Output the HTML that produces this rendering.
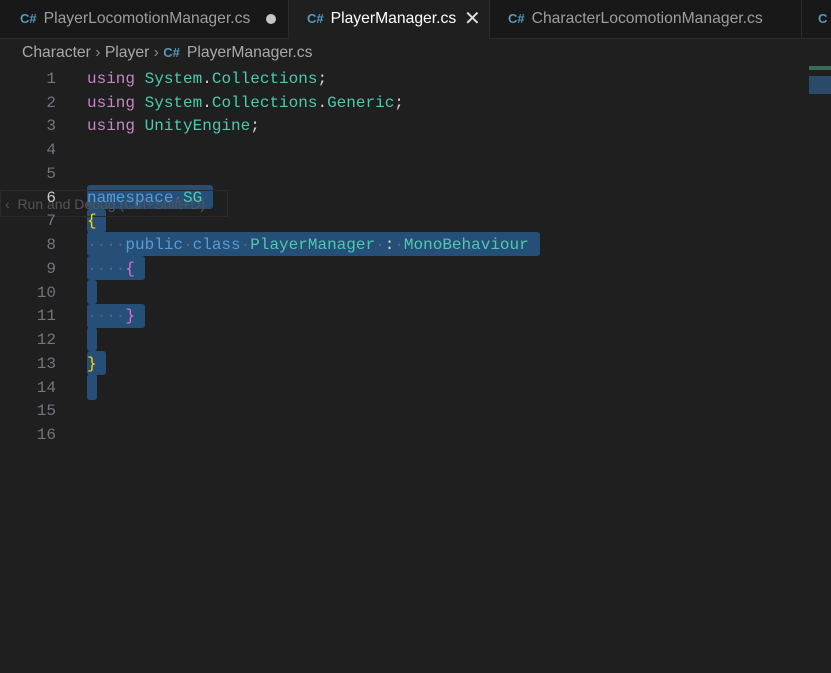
<!DOCTYPE html><html><head><style>
body{margin:0;width:831px;height:673px;background:#1f1f1f;overflow:hidden;font-family:"Liberation Sans",sans-serif;position:relative}
.tabs{position:absolute;left:0;top:0;width:831px;height:38px;background:#181818;border-bottom:1px solid #2b2b2b}
.tab{position:absolute;top:0;height:38px;background:#181818;border-right:1px solid #2b2b2b;color:#9d9d9d;font-size:15.7px;line-height:38px;box-sizing:border-box}
.tab.act{background:#1f1f1f;color:#fff;height:39px}
.ci{color:#519aba;font-weight:bold;font-size:13px;margin-right:7px}
.bc{position:absolute;left:22px;top:44px;color:#a9a9a9;font-size:15.7px}
.code{position:absolute;left:87px;font:16px/23.73px "Liberation Mono",monospace;white-space:pre;color:#d4d4d4}
.sel{position:absolute;background:#264f78;border-radius:3px}
.k{color:#c586c0}.t{color:#4ec9b0}.b{color:#569cd6}.y{color:#ffd700}.p{color:#da70d6}.d{color:#4a6a8a}
</style></head><body>
<div class="tabs">
<div class="tab" style="left:0;width:289px;padding-left:20px"><span class="ci">C#</span>PlayerLocomotionManager.cs<span style="position:absolute;left:266px;top:14px;width:10px;height:10px;border-radius:50%;background:#c5c5c5"></span></div>
<div class="tab act" style="left:289px;width:201px;padding-left:18px"><span class="ci">C#</span>PlayerManager.cs<span style="position:absolute;left:175px;font-size:20px;color:#ddd">✕</span></div>
<div class="tab" style="left:490px;width:312px;padding-left:18px"><span class="ci">C#</span>CharacterLocomotionManager.cs</div>
<div class="tab" style="left:802px;width:40px;padding-left:16px"><span class="ci">C</span></div>
</div>
<div class="bc">Character <span style="color:#888">›</span> Player <span style="color:#888">›</span> <span class="ci">C#</span>PlayerManager.cs</div>
<div style="position:absolute;left:809px;top:66px;width:22px;height:4px;background:#3a6a5a"></div>
<div style="position:absolute;left:809px;top:76px;width:22px;height:18px;background:#2a4a6a"></div>
<div class="sel" style="left:87px;top:185px;width:126px;height:24px"></div>
<div class="sel" style="left:87px;top:209px;width:19px;height:24px"></div>
<div class="sel" style="left:87px;top:232px;width:453px;height:24px"></div>
<div class="sel" style="left:87px;top:256px;width:58px;height:24px"></div>
<div class="sel" style="left:87px;top:280px;width:10px;height:24px"></div>
<div class="sel" style="left:87px;top:304px;width:58px;height:24px"></div>
<div class="sel" style="left:87px;top:327px;width:10px;height:24px"></div>
<div class="sel" style="left:87px;top:351px;width:19px;height:24px"></div>
<div class="sel" style="left:87px;top:374px;width:10px;height:26px"></div>
<div style="position:absolute;left:0;top:190px;width:228px;height:27px;border:1px solid #2a2a2a;color:#555;font-size:14px;line-height:27px;padding-left:4px;box-sizing:border-box">‹ &nbsp;Run and Debug (Ctrl+Shift+D)</div>
<div style="font:16px/23.73px 'Liberation Mono',monospace;position:absolute;top:68px;left:0;width:56px;text-align:right;color:#6e7681">1<br>2<br>3<br>4<br>5<br><span style="color:#ccc">6</span><br>7<br>8<br>9<br>10<br>11<br>12<br>13<br>14<br>15<br>16</div>
<div class="code" style="top:68px"><span class="k">using</span> <span class="t">System</span>.<span class="t">Collections</span>;
<span class="k">using</span> <span class="t">System</span>.<span class="t">Collections</span>.<span class="t">Generic</span>;
<span class="k">using</span> <span class="t">UnityEngine</span>;


<span class="b">namespace</span><span class="d">·</span><span class="t">SG</span>
<span class="y">{</span>
<span class="d">····</span><span class="b">public</span><span class="d">·</span><span class="b">class</span><span class="d">·</span><span class="t">PlayerManager</span><span class="d">·</span>:<span class="d">·</span><span class="t">MonoBehaviour</span>
<span class="d">····</span><span class="p">{</span>

<span class="d">····</span><span class="p">}</span>

<span class="y">}</span>
</div>
</body></html>
